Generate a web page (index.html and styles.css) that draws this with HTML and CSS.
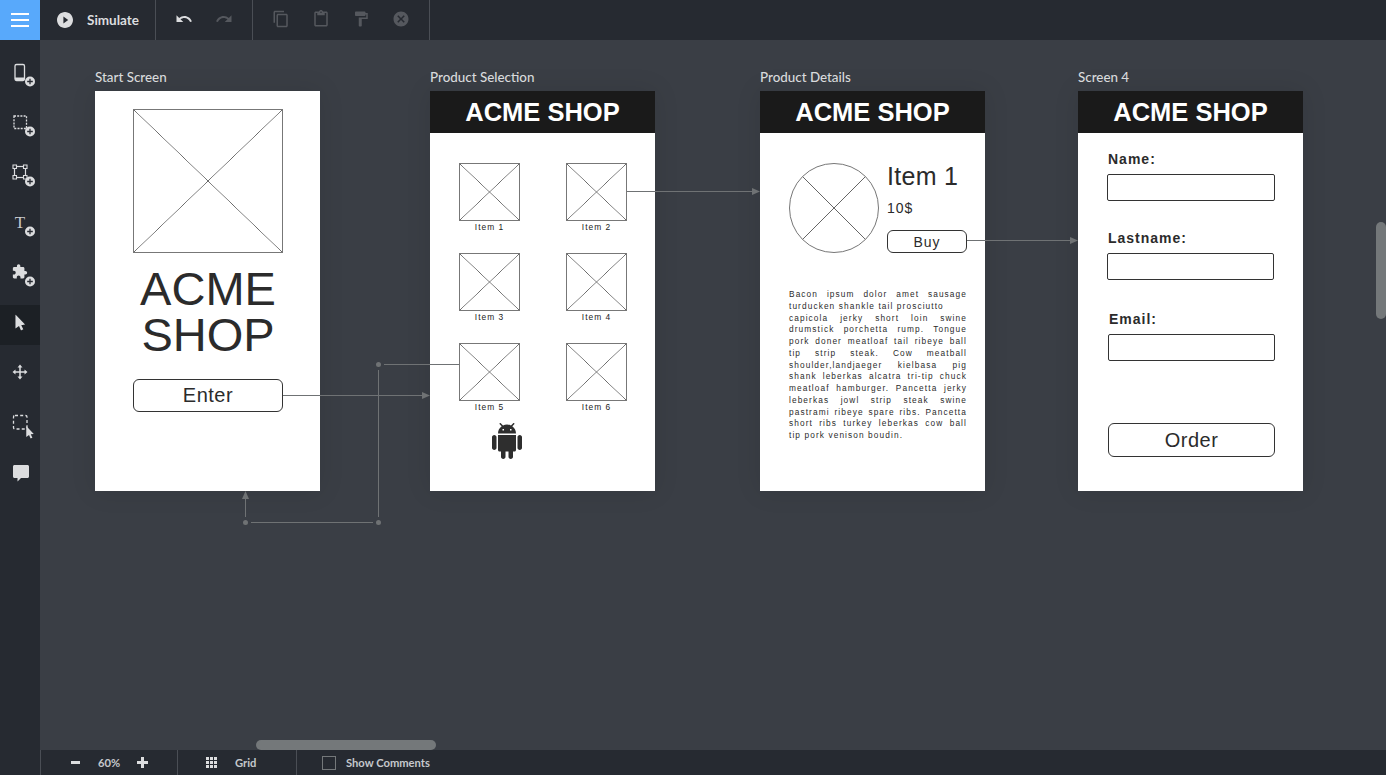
FILE: index.html
```html
<!DOCTYPE html>
<html>
<head>
<meta charset="utf-8">
<title>Simulate</title>
<link rel="stylesheet" href="styles.css">
</head>
<body>

<svg class="defs" width="0" height="0">
	<symbol id="badge" viewBox="0 0 40 40">
		<circle cx="30" cy="29.5" r="5" fill="#dcdddf"/>
		<path d="M27.2 29.5h5.6M30 26.7v5.6" stroke="#262a31" stroke-width="1.3"/>
	</symbol>
	<symbol id="cursor" viewBox="0 0 12 17">
		<path d="M1 0l10 10.5-4 .6 2.2 4.4-2.4 1.2L4.700 12 1 14.500z" fill="#dcdddf"/>
	</symbol>
</svg>

<!-- top toolbar -->
<div class="topbar">
	<div class="menu-btn"><span></span><span></span><span></span></div>
	<div class="top-group simulate">
		<svg class="ico-play" viewBox="2 2 20 20"><path d="M12 2C6.480 2 2 6.480 2 12s4.480 10 10 10 10-4.480 10-10S17.520 2 12 2zm-2 14.500v-9l6 4.500-6 4.500z"/></svg>
		<span>Simulate</span>
	</div>
	<div class="top-group history">
		<svg class="ico" viewBox="0 0 24 24"><path d="M12.500 8c-2.650 0-5.050.99-6.900 2.600L2 7v9h9l-3.620-3.620c1.390-1.160 3.160-1.880 5.120-1.880 3.540 0 6.550 2.310 7.600 5.500l2.370-.78C21.080 11.030 17.150 8 12.500 8z"/></svg>
		<svg class="ico off" viewBox="0 0 24 24"><path d="M18.400 10.600C16.550 8.990 14.150 8 11.500 8c-4.650 0-8.580 3.030-9.960 7.220L3.900 16c1.050-3.190 4.050-5.500 7.600-5.500 1.950 0 3.730.72 5.120 1.880L13 16h9V7l-3.600 3.600z"/></svg>
	</div>
	<div class="top-group edits">
		<svg class="ico off" viewBox="0 0 24 24"><path d="M16 1H4c-1.100 0-2 .9-2 2v14h2V3h12V1zm3 4H8c-1.100 0-2 .9-2 2v14c0 1.100.9 2 2 2h11c1.100 0 2-.9 2-2V7c0-1.100-.9-2-2-2zm0 16H8V7h11v14z"/></svg>
		<svg class="ico off" viewBox="0 0 24 24"><path d="M19 2h-4.180C14.400.84 13.300 0 12 0c-1.300 0-2.400.84-2.820 2H5c-1.100 0-2 .9-2 2v16c0 1.100.9 2 2 2h14c1.100 0 2-.9 2-2V4c0-1.100-.9-2-2-2zm-7 0c.55 0 1 .45 1 1s-.45 1-1 1-1-.45-1-1 .45-1 1-1zm7 18H5V4h2v3h10V4h2v16z"/></svg>
		<svg class="ico off" viewBox="0 0 24 24"><path d="M18 4V3c0-.55-.45-1-1-1H5c-.55 0-1 .45-1 1v4c0 .55.45 1 1 1h12c.55 0 1-.45 1-1V6h1v4H9v11c0 .55.45 1 1 1h2c.55 0 1-.45 1-1v-9h8V4h-3z"/></svg>
		<svg class="ico off" viewBox="0 0 24 24"><path d="M12 2C6.470 2 2 6.470 2 12s4.470 10 10 10 10-4.470 10-10S17.530 2 12 2zm5 13.590L15.590 17 12 13.410 8.410 17 7 15.590 10.590 12 7 8.410 8.410 7 12 10.590 15.590 7 17 8.410 13.410 12 17 15.590z"/></svg>
	</div>
</div>

<div class="body">

	<!-- left tools -->
	<div class="sidebar">
		<div class="tool"><svg viewBox="0 0 40 40">
			<rect x="15" y="12.500" width="9.500" height="16" rx="1.500" fill="none" stroke="#dcdddf" stroke-width="1.300"/>
			<path d="M15 25.500h9.500v1.500a1.500 1.500 0 0 1-1.500 1.500h-6.500a1.500 1.500 0 0 1-1.500-1.500z" fill="#dcdddf"/>
			<use href="#badge" width="40" height="40"/></svg></div>
		<div class="tool"><svg viewBox="0 0 40 40">
			<rect x="14" y="14" width="12.500" height="12.500" fill="none" stroke="#dcdddf" stroke-width="1.300" stroke-dasharray="2 1.200"/>
			<use href="#badge" width="40" height="40"/></svg></div>
		<div class="tool"><svg viewBox="0 0 40 40">
			<rect x="14.500" y="14.500" width="11" height="11" fill="none" stroke="#dcdddf" stroke-width="1.200"/>
			<path d="M13 13h3.500v3.500H13zM23.500 13H27v3.500h-3.500zM13 23.500h3.500V27H13zM23.500 23.500H27V27h-3.500z" fill="#262a31" stroke="#dcdddf" stroke-width="1.100"/>
			<use href="#badge" width="40" height="40"/></svg></div>
		<div class="tool"><svg viewBox="0 0 40 40">
			<text x="20" y="26" class="tool-t">T</text>
			<use href="#badge" width="40" height="40"/></svg></div>
		<div class="tool"><svg viewBox="0 0 40 40">
			<path transform="translate(11.500 11.500) scale(.68)" fill="#dcdddf" d="M20.500 11H19V7c0-1.100-.9-2-2-2h-4V3.500C13 2.120 11.880 1 10.500 1S8 2.120 8 3.500V5H4c-1.100 0-1.990.9-1.990 2v3.800H3.500c1.490 0 2.700 1.210 2.700 2.700s-1.210 2.700-2.700 2.700H2V20c0 1.100.9 2 2 2h3.800v-1.500c0-1.490 1.210-2.700 2.700-2.700 1.490 0 2.700 1.210 2.700 2.700V22H17c1.100 0 2-.9 2-2v-4h1.500c1.380 0 2.500-1.120 2.500-2.500S21.880 11 20.500 11z"/>
			<use href="#badge" width="40" height="40"/></svg></div>
		<div class="tool active"><svg viewBox="0 0 40 40">
			<use href="#cursor" x="14.500" y="9.500" width="11.500" height="16.300"/></svg></div>
		<div class="tool"><svg viewBox="0 0 40 40">
			<path d="M20 14v12M14 20h12" stroke="#dcdddf" stroke-width="1.500"/>
			<path d="M20 12.500l2.500 3h-5zM20 27.500l2.500-3h-5zM12.500 20l3-2.500v5zM27.500 20l-3-2.500v5z" fill="#dcdddf"/></svg></div>
		<div class="tool"><svg viewBox="0 0 40 40">
			<rect x="13.500" y="13.500" width="13.500" height="13.500" rx="1.500" fill="none" stroke="#dcdddf" stroke-width="1.300" stroke-dasharray="3 2.200"/>
			<use href="#cursor" x="25.500" y="24" width="9" height="12.750"/></svg></div>
		<div class="tool"><svg viewBox="0 0 40 40">
			<path d="M14.500 13h13c.8 0 1.500.7 1.500 1.500v10c0 .8-.7 1.500-1.500 1.500H21l-3.500 3.500V26h-3c-.8 0-1.500-.7-1.500-1.500v-10c0-.8.7-1.500 1.500-1.500z" fill="#dcdddf"/></svg></div>
	</div>

	<div class="main">
		<div class="canvas">

			<div class="screen screen-start">
				<div class="screen-name">Start Screen</div>
				<div class="sheet start">
					<div class="ph ph-hero"></div>
					<div class="start-title">ACME SHOP</div>
					<button class="wire-btn enter">Enter</button>
				</div>
			</div>

			<div class="screen screen-products">
				<div class="screen-name">Product Selection</div>
				<div class="sheet">
					<div class="shop-head">ACME SHOP</div>
					<div class="products">
						<div class="product"><div class="ph"></div>Item 1</div>
						<div class="product"><div class="ph"></div>Item 2</div>
						<div class="product"><div class="ph"></div>Item 3</div>
						<div class="product"><div class="ph"></div>Item 4</div>
						<div class="product"><div class="ph"></div>Item 5</div>
						<div class="product"><div class="ph"></div>Item 6</div>
					</div>
					<svg class="android" viewBox="0 0 24 24"><path d="M6 18c0 .55.45 1 1 1h1v3.500c0 .83.67 1.500 1.500 1.500s1.500-.67 1.500-1.500V19h2v3.500c0 .83.67 1.500 1.500 1.500s1.500-.67 1.500-1.500V19h1c.55 0 1-.45 1-1V8H6v10zM3.500 8C2.670 8 2 8.670 2 9.500v7c0 .83.67 1.500 1.500 1.500S5 17.330 5 16.500v-7C5 8.670 4.330 8 3.500 8zm17 0c-.83 0-1.500.67-1.500 1.500v7c0 .83.67 1.500 1.500 1.500s1.500-.67 1.500-1.500v-7c0-.83-.67-1.500-1.500-1.500zm-4.970-5.840l1.300-1.300c.2-.2.2-.51 0-.71-.2-.2-.51-.2-.71 0l-1.480 1.480C13.850 1.230 12.950 1 12 1c-.96 0-1.860.23-2.660.63L7.850.15c-.2-.2-.51-.2-.71 0-.2.2-.2.51 0 .71l1.310 1.310C6.970 3.260 6 5.010 6 7h12c0-1.990-.97-3.750-2.470-4.840zM10 5H9V4h1v1zm5 0h-1V4h1v1z"/></svg>
				</div>
			</div>

			<div class="screen screen-details">
				<div class="screen-name">Product Details</div>
				<div class="sheet">
					<div class="shop-head">ACME SHOP</div>
					<div class="details">
						<div class="details-top">
							<div class="ph ph-round"></div>
							<div class="details-info">
								<div class="item-name">Item 1</div>
								<div class="item-price">10$</div>
								<button class="wire-btn buy">Buy</button>
							</div>
						</div>
						<p class="blurb">Bacon ipsum dolor amet sausage turducken shankle tail prosciutto<br>capicola jerky short loin swine drumstick porchetta rump. Tongue pork doner meatloaf tail ribeye ball tip strip steak. Cow meatball shoulder,landjaeger kielbasa pig shank leberkas alcatra tri-tip chuck meatloaf hamburger. Pancetta jerky leberkas jowl strip steak swine pastrami ribeye spare ribs. Pancetta short ribs turkey leberkas cow ball tip pork venison boudin.</p>
					</div>
				</div>
			</div>

			<div class="screen screen-order">
				<div class="screen-name">Screen 4</div>
				<div class="sheet">
					<div class="shop-head">ACME SHOP</div>
					<div class="order">
						<div class="field"><label>Name:</label><input type="text"></div>
						<div class="field field-last"><label>Lastname:</label><input type="text"></div>
						<div class="field field-email"><label>Email:</label><input type="text"></div>
						<button class="wire-btn order-btn">Order</button>
					</div>
				</div>
			</div>

			<!-- links between screens, in page coordinates -->
			<svg class="links" viewBox="40 40 1346 710">
				<g fill="none" stroke="#6f7274" stroke-width="1">
					<path d="M283 395.500h140M627 191.500h126M967 240.500h104"/>
					<path d="M384 364.500h75M378.500 370v147M373 522.500H251M245.500 517v-20"/>
				</g>
				<g fill="#6f7274">
					<path d="M430 395.500l-8-3.500v7zM760 191.500l-8-3.500v7zM1078 240.500l-8-3.500v7zM245.500 491l-3.500 8h7z"/>
					<circle cx="378.500" cy="364.500" r="2.500"/>
					<circle cx="378.500" cy="522.500" r="2.500"/>
					<circle cx="245.500" cy="522.500" r="2.500"/>
				</g>
			</svg>

			<div class="scroll-y"></div>
			<div class="scroll-x"></div>
		</div>

		<!-- status bar -->
		<div class="statusbar">
			<div class="status-group zoom">
				<span class="zoom-sign zoom-minus"></span>
				<span class="zoom-val">60%</span>
				<span class="zoom-sign zoom-plus"></span>
			</div>
			<div class="status-group grid-opt">
				<svg class="ico-grid" viewBox="0 0 11 11"><path d="M0 0h3v3H0zM4 0h3v3H4zM8 0h3v3H8zM0 4h3v3H0zM4 4h3v3H4zM8 4h3v3H8zM0 8h3v3H0zM4 8h3v3H4zM8 8h3v3H8z"/></svg>
				<span>Grid</span>
			</div>
			<div class="status-group comments">
				<span class="check"></span>
				<span>Show Comments</span>
			</div>
		</div>
	</div>
</div>

</body>
</html>
```

FILE: styles.css
```css
html, body {
	margin: 0;
	padding: 0;
	height: 100%;
	overflow: hidden;
}
body {
	display: flex;
	flex-direction: column;
	background-color: #3a3e45;
	color: #d0d2d5;
	font-family: Lato, "Noto Sans", sans-serif;
	font-size: 13px;
}
.defs {
	position: absolute;
}

/* top bar */
.topbar {
	display: flex;
	flex: none;
	height: 40px;
	background-color: #262a31;
}
.menu-btn {
	display: flex;
	flex-direction: column;
	justify-content: center;
	align-items: center;
	gap: 4px;
	width: 40px;
	background-color: #58a9fb;
}
.menu-btn span {
	width: 18px;
	height: 2px;
	background-color: #fff;
}
.top-group {
	display: flex;
	align-items: center;
	border-right: 1px solid #4a4e55;
	box-sizing: border-box;
}
.simulate {
	width: 116px;
	padding-left: 17px;
	gap: 14px;
	font-size: 13.500px;
	font-weight: 700;
	color: #dcdddf;
}
.ico-play {
	width: 16px;
	height: 16px;
	fill: #dcdddf;
}
.history {
	width: 97px;
	padding-left: 19px;
	gap: 22px;
}
.edits {
	width: 177px;
	padding-left: 19px;
	gap: 22px;
}
.ico {
	width: 18px;
	height: 18px;
	margin-top: -3px;
	fill: #dcdddf;
}
.ico.off {
	fill: #55585e;
}

/* body */
.body {
	display: flex;
	flex: 1;
	min-height: 0;
}
.sidebar {
	flex: none;
	display: flex;
	flex-direction: column;
	gap: 10px;
	width: 40px;
	padding-top: 12px;
	box-sizing: border-box;
	background-color: #262a31;
}
.tool {
	height: 40px;
}
.tool svg {
	display: block;
	width: 40px;
	height: 40px;
	overflow: visible;
}
.tool.active {
	margin: 3px 0 -3px;
	background-color: #1c2025;
}
.tool-t {
	font-family: "Liberation Serif", serif;
	font-size: 17px;
	text-anchor: middle;
	fill: #c8c9cc;
}
.main {
	flex: 1;
	display: flex;
	flex-direction: column;
	min-width: 0;
}

/* canvas */
.canvas {
	position: relative;
	flex: 1;
	overflow: hidden;
}
.screen {
	position: absolute;
	top: 27px;
	width: 225px;
}
.screen-start { left: 55px; }
.screen-products { left: 390px; }
.screen-details { left: 720px; }
.screen-order { left: 1038px; }
.screen-name {
	height: 24px;
	line-height: 20px;
	font-size: 13.400px;
	font-weight: 500;
	color: #d8dadc;
}
.sheet {
	box-sizing: border-box;
	height: 400px;
	background-color: #fff;
	color: #2b2b2b;
	font-family: "Liberation Sans", Arial, sans-serif;
	box-shadow: 0 0 24px rgba(0, 0, 0, .1);
}
.shop-head {
	height: 42px;
	line-height: 42px;
	text-align: center;
	background-color: #1a1a1a;
	color: #fff;
	font-size: 25.500px;
	font-weight: bold;
}
.ph {
	box-sizing: border-box;
	border: 1px solid #777;
	background-image:
		linear-gradient(to top right, transparent calc(50% - .6px), #666 50%, transparent calc(50% + .6px)),
		linear-gradient(to bottom right, transparent calc(50% - .6px), #666 50%, transparent calc(50% + .6px));
}
.wire-btn {
	display: block;
	box-sizing: border-box;
	margin: 0;
	padding: 0;
	background-color: #fff;
	border: 1px solid #333;
	border-radius: 6px;
	color: #2b2b2b;
	font-family: "Liberation Sans", Arial, sans-serif;
	font-size: 20px;
	letter-spacing: .5px;
}

/* start screen */
.start {
	padding: 18px 0 0 38px;
}
.ph-hero {
	width: 150px;
	height: 144px;
}
.start-title {
	width: 150px;
	margin-top: 13px;
	text-align: center;
	font-size: 47px;
	line-height: 46px;
}
.enter {
	width: 150px;
	height: 33px;
	margin-top: 21px;
}

/* product selection */
.products {
	display: grid;
	grid-template-columns: 61px 61px;
	grid-auto-rows: 90px;
	column-gap: 46px;
	padding: 30px 0 0 29px;
}
.product {
	font-size: 8.400px;
	line-height: 12px;
	letter-spacing: 1px;
	text-align: center;
	color: #222;
}
.product .ph {
	height: 58px;
}
.android {
	display: block;
	width: 36px;
	height: 36px;
	margin: -10px 0 0 58.500px;
	fill: #2e2e2e;
}

/* product details */
.details {
	padding: 30px 18px 0 29px;
}
.details-top {
	display: flex;
	gap: 8px;
}
.ph-round {
	width: 90px;
	height: 90px;
	border-radius: 50%;
	flex: none;
}
.item-name {
	font-size: 25px;
	line-height: 26px;
	letter-spacing: .3px;
}
.item-price {
	margin-top: 11px;
	font-size: 14px;
	line-height: 16px;
	letter-spacing: 1px;
}
.buy {
	width: 80px;
	height: 23px;
	margin-top: 14px;
	font-size: 14px;
	letter-spacing: 1px;
}
.blurb {
	margin: 36px 0 0;
	font-size: 8.300px;
	line-height: 11.750px;
	letter-spacing: 1.100px;
	text-align: justify;
}

/* order form */
.order {
	padding: 16px 0 0 29px;
}
.field {
	height: 79px;
}
.field label {
	display: block;
	height: 25px;
	padding-left: 1px;
	line-height: 20px;
	font-size: 14px;
	font-weight: bold;
	letter-spacing: 1px;
}
.field input {
	display: block;
	box-sizing: border-box;
	width: 168px;
	height: 27px;
	margin: 0;
	padding: 0;
	background-color: #fff;
	border: 1px solid #333;
	border-radius: 2px;
	outline: none;
}
.field-last input {
	width: 167px;
}
.field-email {
	margin-top: 2px;
	margin-left: 1px;
	height: 114px;
}
.field-email input {
	width: 167px;
}
.order-btn {
	width: 167px;
	height: 34px;
	margin-left: 1px;
}

/* links and scrollbars sit over the screens */
.links {
	position: absolute;
	left: 0;
	top: 0;
	width: 1346px;
	height: 710px;
	pointer-events: none;
}
.scroll-y {
	position: absolute;
	right: 0;
	top: 182px;
	width: 10px;
	height: 97px;
	border-radius: 5px;
	background-color: #74787a;
}
.scroll-x {
	position: absolute;
	left: 216px;
	bottom: 0;
	width: 180px;
	height: 10px;
	border-radius: 5px;
	background-color: #74787a;
}

/* status bar */
.statusbar {
	display: flex;
	flex: none;
	height: 25px;
	background-color: #262a31;
	font-size: 11.200px;
	font-weight: 700;
	color: #c5c8cc;
}
.status-group {
	display: flex;
	align-items: center;
	box-sizing: border-box;
	border-left: 1px solid #4a4e55;
}
.zoom {
	width: 137px;
	padding-left: 30px;
}
.zoom-sign {
	position: relative;
	height: 3px;
	background-color: #dcdddf;
}
.zoom-minus {
	width: 9px;
}
.zoom-plus {
	width: 11px;
}
.zoom-plus::after {
	content: "";
	position: absolute;
	left: 4px;
	top: -4px;
	width: 3px;
	height: 11px;
	background-color: #dcdddf;
}
.zoom-val {
	width: 22px;
	margin: 0 17px 0 18px;
}
.grid-opt {
	width: 119px;
	padding-left: 28px;
	gap: 18px;
}
.ico-grid {
	width: 11px;
	height: 11px;
	fill: #dcdddf;
}
.comments {
	padding-left: 25px;
	gap: 10px;
}
.check {
	width: 12px;
	height: 12px;
	border: 1px solid #74787a;
}
```
